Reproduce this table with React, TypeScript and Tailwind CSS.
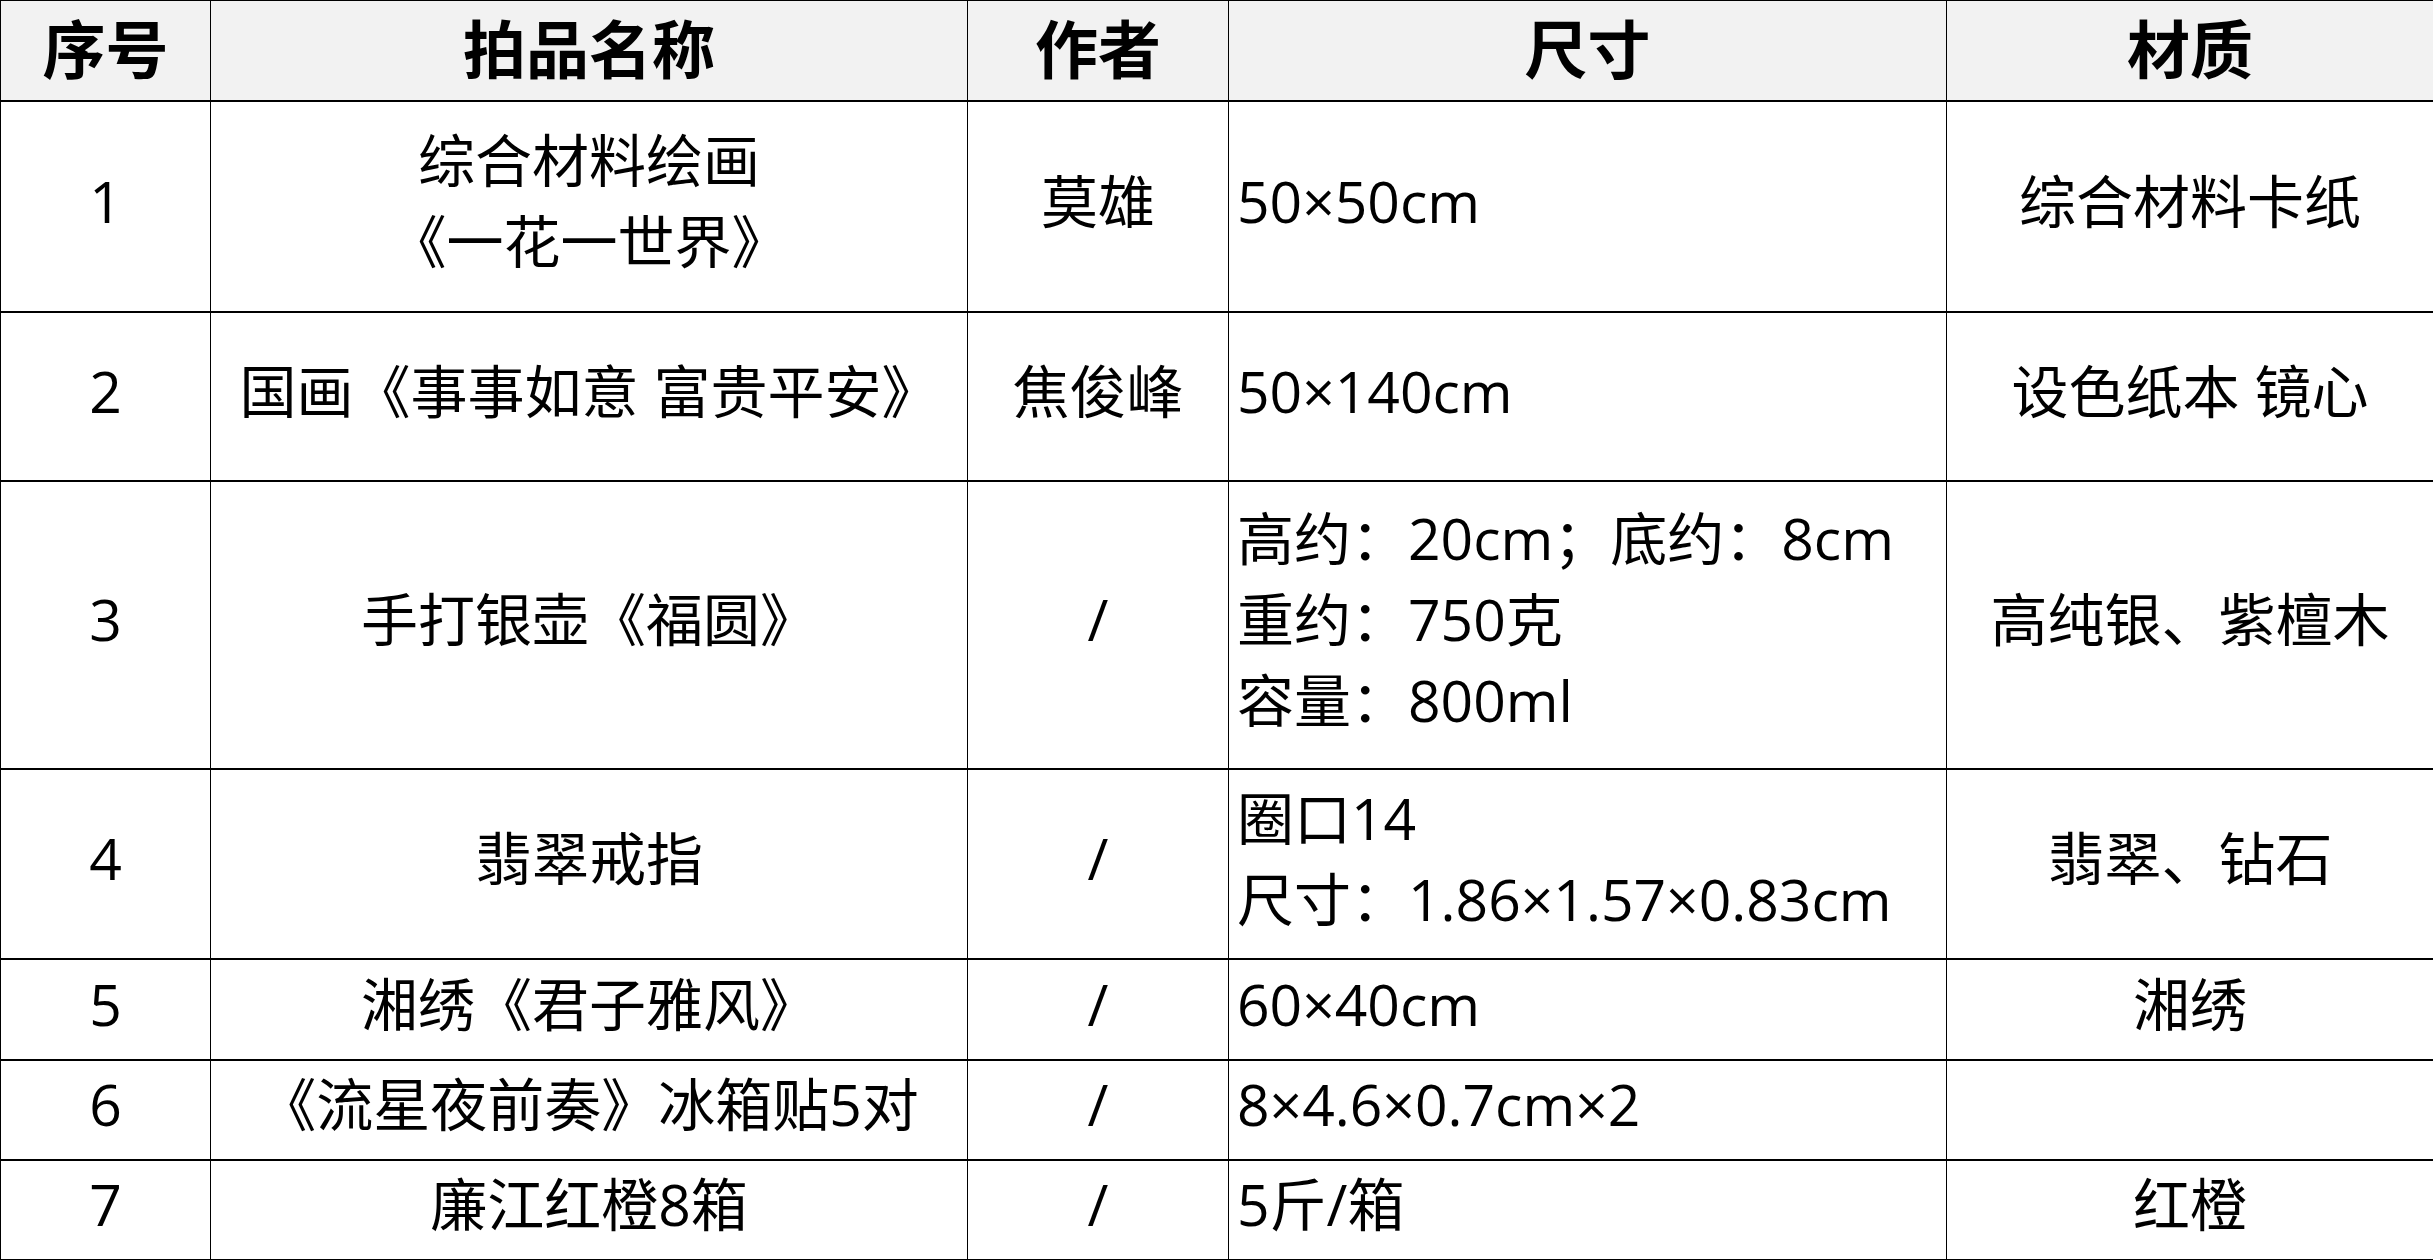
import React from "react";

type Row = {
  no: string;
  name: string[];
  author: string;
  size: string[];
  material: string;
  h: string;
};

const rows: Row[] = [
  { no: "1", name: ["综合材料绘画", "《一花一世界》"], author: "莫雄", size: ["50×50cm"], material: "综合材料卡纸", h: "h-[211px]" },
  { no: "2", name: ["国画《事事如意 富贵平安》"], author: "焦俊峰", size: ["50×140cm"], material: "设色纸本 镜心", h: "h-[169px]" },
  {
    no: "3",
    name: ["手打银壶《福圆》"],
    author: "/",
    size: ["高约：20cm；底约：8cm", "重约：750克", "容量：800ml"],
    material: "高纯银、紫檀木",
    h: "h-[288px]",
  },
  { no: "4", name: ["翡翠戒指"], author: "/", size: ["圈口14", "尺寸：1.86×1.57×0.83cm"], material: "翡翠、钻石", h: "h-[190px]" },
  { no: "5", name: ["湘绣《君子雅风》"], author: "/", size: ["60×40cm"], material: "湘绣", h: "h-[101px]" },
  { no: "6", name: ["《流星夜前奏》冰箱贴5对"], author: "/", size: ["8×4.6×0.7cm×2"], material: "", h: "h-[100px]" },
  { no: "7", name: ["廉江红橙8箱"], author: "/", size: ["5斤/箱"], material: "红橙", h: "h-[100px]" },
];

const cell = "border-x border-y-2 border-black align-middle leading-[81px] px-1 pt-0 pb-[10px]";

export default function App() {
  return (
    <div className="w-[2433px] h-[1260px] bg-white overflow-hidden font-['Open_Sans','Noto_Sans_CJK_SC',sans-serif] text-black">
      <table className="w-[2433px] table-fixed border-collapse border-t border-black">
        <colgroup>
          <col className="w-[210px]" />
          <col className="w-[757px]" />
          <col className="w-[261px]" />
          <col className="w-[718px]" />
          <col className="w-[487px]" />
        </colgroup>
        <thead>
          <tr className="h-[100px] bg-[#f2f2f2] text-[63px] font-bold">
            <th className="border-x border-b-2 border-t border-black align-middle leading-none pb-[4px]">序号</th>
            <th className="border-x border-b-2 border-t border-black align-middle leading-none pb-[4px]">拍品名称</th>
            <th className="border-x border-b-2 border-t border-black align-middle leading-none pb-[4px]">作者</th>
            <th className="border-x border-b-2 border-t border-black align-middle leading-none pb-[4px]">尺寸</th>
            <th className="border-x border-b-2 border-t border-black align-middle leading-none pb-[4px]">材质</th>
          </tr>
        </thead>
        <tbody className="text-[57px]">
          {rows.map((r) => (
            <tr key={r.no} className={r.h}>
              <td className={`${cell} text-center`}>{r.no}</td>
              <td className={`${cell} text-center whitespace-nowrap`}>
                {r.name.map((l) => (
                  <div key={l}>{l}</div>
                ))}
              </td>
              <td className={`${cell} text-center`}>{r.author}</td>
              <td className={`${cell} text-left pl-2 whitespace-nowrap`}>
                {r.size.map((l) => (
                  <div key={l}>{l}</div>
                ))}
              </td>
              <td className={`${cell} text-center whitespace-nowrap`}>{r.material}</td>
            </tr>
          ))}
        </tbody>
      </table>
    </div>
  );
}
